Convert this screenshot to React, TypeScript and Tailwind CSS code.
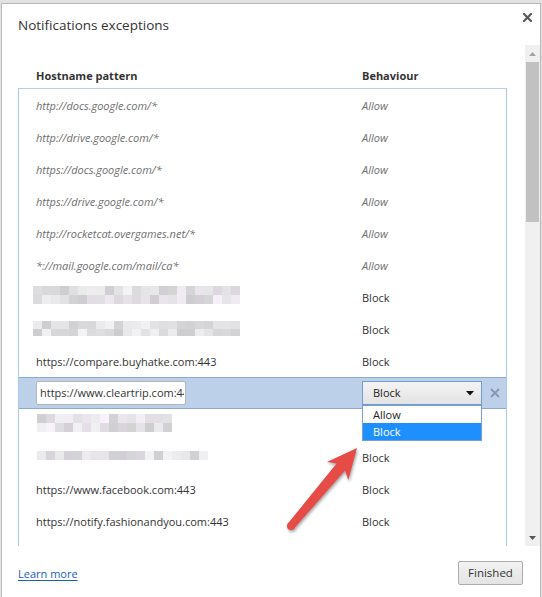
import React from "react";

type Row = { host?: string; b: string; italic?: boolean; blur?: { seed: number; cols: number[]; h: number[]; ml: number; mt: number } };

const rows: Row[] = [
  { host: "http://docs.google.com/*", b: "Allow", italic: true },
  { host: "http://drive.google.com/*", b: "Allow", italic: true },
  { host: "https://docs.google.com/*", b: "Allow", italic: true },
  { host: "https://drive.google.com/*", b: "Allow", italic: true },
  { host: "http://rocketcat.overgames.net/*", b: "Allow", italic: true },
  { host: "*://mail.google.com/mail/ca*", b: "Allow", italic: true },
  { b: "Block", blur: { seed: 3, cols: [23, 23], h: [9, 9], ml: -3, mt: -6 } },
  { b: "Block", blur: { seed: 7, cols: [23, 23], h: [8, 7], ml: -3, mt: -2 } },
  { host: "https://compare.buyhatke.com:443", b: "Block" },
];

const rowsAfter: Row[] = [
  { b: "", blur: { seed: 11, cols: [15, 15], h: [9, 9], ml: 1, mt: -6 } },
  { b: "Block", blur: { seed: 17, cols: [19], h: [9], ml: 1, mt: -4 } },
  { host: "https://www.facebook.com:443", b: "Block" },
  { host: "https://notify.fashionandyou.com:443", b: "Block" },
  { b: "" },
];

function shade(seed: number, i: number) {
  const x = Math.sin(seed * 97.31 + i * 12.9898) * 43758.5453;
  const f = x - Math.floor(x);
  const v = Math.round(205 + f * 38);
  const t = Math.sin(seed + i * 3.1) > 0.7 ? 6 : 0;
  return `rgb(${v + t},${v},${v + t + 2})`;
}

function Mosaic({ seed, cols, h, ml, mt }: { seed: number; cols: number[]; h: number[]; ml: number; mt: number }) {
  return (
    <div className="flex flex-col" style={{ marginLeft: ml, marginTop: mt }}>
      {cols.map((c, r) => (
        <div key={r} className="flex">
          {Array.from({ length: c }).map((_, i) => (
            <div key={i} className="w-[9px]" style={{ height: h[r], background: shade(seed + r * 31, i) }} />
          ))}
        </div>
      ))}
    </div>
  );
}

function ListRow({ r }: { r: Row }) {
  return (
    <div className="h-[32px] flex items-center pl-[17px] pt-[1px] shrink-0">
      <div className="w-[326px] shrink-0">
        {r.blur ? (
          <Mosaic {...r.blur} />
        ) : (
          <span className={r.italic ? "italic text-[#6f6f6f]" : "text-[#333]"}>{r.host}</span>
        )}
      </div>
      <span className={r.italic ? "italic text-[#6f6f6f]" : "text-[#333]"}>{r.b}</span>
    </div>
  );
}

export default function App() {
  return (
    <div className="w-[542px] h-[597px] overflow-hidden relative bg-[#e2e2e2] pt-[3px] pl-[1px] font-['Open_Sans',sans-serif] text-[11px] leading-[14px]">
      <div className="w-[540px] h-[610px] bg-white border border-[#b9b9b9] flex flex-col">
        {/* title bar */}
        <div className="h-[41px] shrink-0 flex items-start justify-between pl-[16px] pr-[8px]">
          <div className="pt-[12px] text-[13.5px] leading-[18px] text-[#333]">Notifications exceptions</div>
          <svg className="mt-[9px]" width="9" height="9" viewBox="0 0 9 9">
            <path d="M1 1 L8 8 M8 1 L1 8" stroke="#5a5a5a" strokeWidth="2.2" strokeLinecap="square" />
          </svg>
        </div>

        {/* scroll area */}
        <div className="h-[501px] shrink-0 flex overflow-hidden">
          <div className="w-[523px] shrink-0 flex flex-col overflow-hidden">
            <div className="h-[43px] shrink-0 flex pt-[24px] pl-[34px] font-bold text-[#333]">
              <div className="w-[326px] shrink-0">Hostname pattern</div>
              <div>Behaviour</div>
            </div>
            <div className="ml-[16px] w-[489px] border border-[#a9c8ec] border-t-[#b9cde4] flex flex-col">
              {rows.map((r, i) => (
                <ListRow key={i} r={r} />
              ))}
              {/* selected row */}
              <div className="h-[32px] shrink-0 flex items-center pl-[17px] bg-[#bcd0ea] border-y border-[#8ea9d1]">
                <div className="w-[326px] shrink-0">
                  <div className="w-[150px] h-[24px] bg-white border border-[#b5b5b5] rounded-[2px] pl-[3px] flex items-center overflow-hidden whitespace-nowrap text-[#333]">
                    <span className="block w-[144px] overflow-hidden">https://www.cleartrip.com:443</span>
                  </div>
                </div>
                <div className="relative w-[120px] h-[24px] shrink-0">
                  <div className="w-full h-full border border-[#6f9bd6] bg-gradient-to-b from-[#f4f4f4] to-[#e3e3e3] flex items-center justify-between pl-[10px] pr-[7px] text-[#222]">
                    <span>Block</span>
                    <svg width="8" height="5" viewBox="0 0 8 5">
                      <path d="M0 0 H8 L4 4.5 Z" fill="#111" />
                    </svg>
                  </div>
                  <div className="absolute left-0 top-[24px] w-[120px] bg-white border border-[#7b9dd3] flex flex-col z-10">
                    <div className="h-[17px] flex items-center pl-[10px] text-[#222]">Allow</div>
                    <div className="h-[17px] flex items-center pl-[10px] bg-[#1e8fff] text-white">Block</div>
                  </div>
                </div>
                <svg className="ml-[8px]" width="10" height="10" viewBox="0 0 10 10">
                  <path d="M1 1 L9 9 M9 1 L1 9" stroke="#8797b3" strokeWidth="1.8" />
                </svg>
              </div>
              {rowsAfter.map((r, i) => (
                <ListRow key={i} r={r} />
              ))}
            </div>
          </div>
          {/* scrollbar */}
          <div className="w-[15px] shrink-0 bg-[#f0f0f0] flex flex-col">
            <div className="h-[17px] shrink-0 flex items-center justify-center">
              <svg width="7" height="4" viewBox="0 0 7 4">
                <path d="M0 4 H7 L3.5 0 Z" fill="#a3a3a3" />
              </svg>
            </div>
            <div className="h-[160px] shrink-0 ml-[1px] mr-[1px] bg-[#c1c1c1]" />
            <div className="flex-1" />
            <div className="h-[17px] shrink-0 flex items-center justify-center">
              <svg width="7" height="4" viewBox="0 0 7 4">
                <path d="M0 0 H7 L3.5 4 Z" fill="#555" />
              </svg>
            </div>
          </div>
        </div>

        {/* bottom bar */}
        <div className="flex justify-between items-start pl-[16px] pr-[17px] pt-[15px]">
          <a className="mt-[6px] text-[#1a5cc4] underline underline-offset-[2px]">Learn more</a>
          <div className="w-[65px] h-[24px] border border-[#acacac] rounded-[2px] bg-gradient-to-b from-[#f2f2f2] to-[#e4e4e4] flex items-center justify-center text-[#333] text-[11.5px]">
            Finished
          </div>
        </div>
      </div>

      {/* red arrow annotation */}
      <svg className="absolute left-0 top-0 pointer-events-none drop-shadow-[1px_2px_1.5px_rgba(0,0,0,0.35)]" width="542" height="597" viewBox="0 0 542 597">
        <polygon
          points="357,448 348.3,479.9 345,470.6 294,528.6 287.9,523.4 336.6,463.5 326.9,461.9"
          fill="#e64b46"
        />
        <circle cx="291" cy="526" r="4" fill="#e64b46" />
      </svg>
    </div>
  );
}
